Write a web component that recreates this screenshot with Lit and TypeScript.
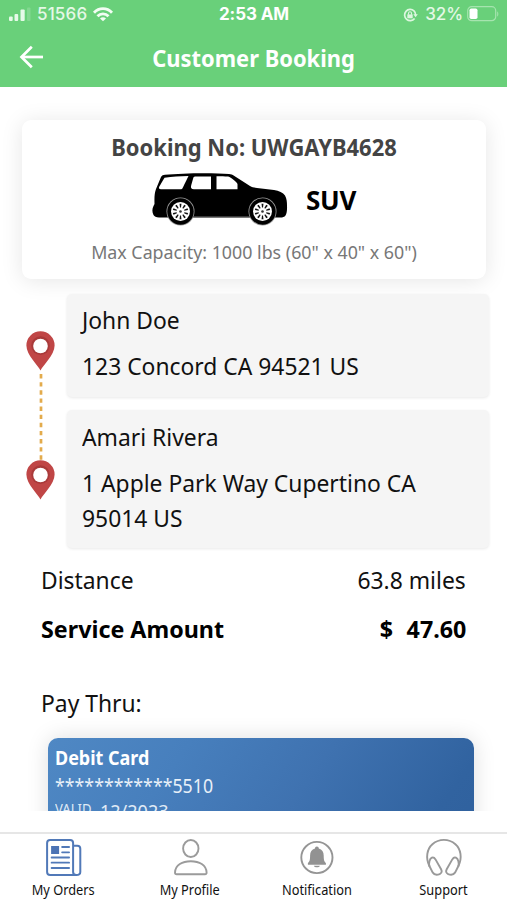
import { LitElement, html, css, svg } from "lit";
import { customElement } from "lit/decorators.js";
import { classMap } from "lit/directives/class-map.js";

const SPOKES = [0, 36, 72, 108, 144, 180, 216, 252, 288, 324];

const wheel = (cx: number) => svg`
  <g transform="translate(${cx} 38.500)">
    <circle r="14" fill="#999" />
    <circle r="13.200" fill="#000" />
    <circle r="9.500" fill="#fff" />
    ${SPOKES.map((a) => svg`<path d="M-1 -7.700h2l-.5 3.800h-1z" fill="#111" transform="rotate(${a})" />`)}
    <circle r="1.3" fill="#333" />
  </g>`;

const suv = html`<svg class="suv" viewBox="0 0 136 54" width="136" height="54">
  <path d="M1.500 42c-1.500-3-1.500-6 0-9l1-2c-.2-7 0-11 1.500-15L9 4C10 2.500 11 2 13 1.800 30 0 62-.3 77 1c2 .2 3.500.8 5 1.700L98 13c2 1.200 4 1.600 7 1.900l17 2c5 .8 9 2.600 11 5.600 1.800 3 2 7 2 10 .2 4-.2 8-1.500 10-1 1.500-3 2-5 2H7c-3 0-4.500-1-5.500-2.500z" />
  <path d="M12.500 4.800c8-1.200 15-1.700 24-1.800L30.500 15.200c-.4.8-1 1-2 1H9c-2 0-2.400-1-1.800-2.500z" fill="#fff" />
  <path d="M43 3.400H59v12.800H42c-2.600 0-3.600-1.500-2.800-4l2-7c.3-1 .8-1.800 1.800-1.800z" fill="#fff" />
  <path d="M64.500 3.200c5 0 8 0 11.500.4 2 .2 9.500 6 9.500 7.600v5H64.500z" fill="#fff" />
  <path d="M42 44h55" stroke="#777" stroke-width="1" />
  ${wheel(28.5)} ${wheel(110.500)}
</svg>`;

const pin = html`<svg viewBox="0 0 29 40" width="29" height="40">
  <path d="M14.500 39.500C12 34 .4 24 .4 14.400a14.100 14.100 0 0 1 28.200 0C28.600 24 17 34 14.500 39.500z" fill="#c04646" />
  <circle cx="14.500" cy="14.600" r="9.300" fill="#a93a3a" />
  <circle cx="14.500" cy="15" r="7.300" fill="#fff" />
</svg>`;

const icons = {
  orders: svg`<g fill="none" stroke="#5179b8" stroke-width="2" transform="translate(.7 0)">
    <path d="M27 6.800V33c0 2 1 3 3.200 3s4-1 4-3V9.800c0-2-1-3-3-3H27M30 36H4c-2 0-3-1-3-3V4c0-2 1-3 3-3h20c2 0 3 1 3 3v28" />
    <path d="M16 8h7M16 13.300h7M5.500 18.500h17.500M5.500 23.700h17.500M5.500 29h17.500" stroke-width="1.800" stroke-linecap="round" />
    <path d="M5 7h8v8H5z" fill="#4b73b5" stroke="none" /></g>`,
  profile: svg`<g fill="none" stroke="#9b9b9b" stroke-width="1.900" stroke-linejoin="round" transform="translate(.9 0)">
    <ellipse cx="17.500" cy="9.500" rx="7.700" ry="8.500" />
    <path d="M1.700 33.500C2 26 9 22.200 17.500 22.200S33 26 33.300 33.500c0 1.200-.5 1.800-1.700 1.800H3.400c-1.200 0-1.700-.6-1.700-1.800z" /></g>`,
  bell: svg`<circle cx="17.500" cy="18.500" r="15.600" fill="none" stroke="#959595" stroke-width="1.900" />
    <path d="M17.500 7.500c1.200 0 1.900.8 1.900 1.900 3.300.9 4.900 3.500 4.900 7 0 4.500.5 6 2.200 7.600v1.700h-18V24c1.700-1.600 2.200-3.100 2.200-7.600 0-3.500 1.600-6.100 4.900-7 0-1.100.7-1.900 1.900-1.900z" fill="#929292" />
    <path d="M14.500 26.800c.5 2 5.500 2 6 0z" fill="#929292" />`,
  support: svg`<g fill="none" stroke="#999" stroke-width="1.900" stroke-linejoin="round" stroke-linecap="round">
    <path d="M3 27C-1 19 .500 10 6 5.200a17.500 17.500 0 0 1 23 0C34.500 10 36 19 32 27" />
    <path d="M3 27c-.8-3 0-7 2.500-8.300 1.600-.6 2.600.1 3.600 1.700l5.600 9.800c1.300 2.500.3 4-1.500 4.900-3 1.300-5.500.5-7-1.700z" />
    <path d="M32 27c.8-3 0-7-2.500-8.300-1.600-.6-2.600.1-3.600 1.700l-5.600 9.800c-1.300 2.500-.3 4 1.500 4.900 3 1.300 5.500.5 7-1.700z" /></g>`,
};

const TABS = [
  { label: "My Orders", icon: icons.orders, cls: "orders" },
  { label: "My Profile", icon: icons.profile, cls: "profile" },
  { label: "Notification", icon: icons.bell, cls: "notification" },
  { label: "Support", icon: icons.support, cls: "support" },
];

@customElement("app-root")
export class AppRoot extends LitElement {
  static styles = css`
    :host {
      display: flex;
      flex-direction: column;
      height: 900px;
      width: 507px;
      overflow: hidden;
      background: #fff;
      color: #111;
      font-family: "Noto Sans", "Open Sans", sans-serif;
      white-space: nowrap;
    }
    * { box-sizing: border-box; }
    svg { display: block; flex: none; overflow: visible; }
    .narrow { display: inline-block; transform: scaleX(0.952); transform-origin: 0 50%; }
    .narrow.end { transform-origin: 100% 50%; }
    header { height: 87px; flex: none; background: #69d07a; color: #fff; }
    .status {
      display: grid;
      grid-template-columns: 1fr auto 1fr;
      height: 29px;
      padding: 0 8px 0 9px;
      align-items: center;
      font: 500 17px/29px Inter, sans-serif;
    }
    .left, .right { display: flex; align-items: center; color: #e4f8e6; }
    .right { justify-content: flex-end; }
    .carrier { margin: 0 6px; letter-spacing: 0.15px; }
    .time { font-weight: 700; letter-spacing: -0.1px; }
    .pct { margin: 0 4px 0 7px; letter-spacing: -0.1px; }
    .bar { display: grid; grid-template-columns: 60px 1fr 60px; height: 58px; align-items: center; }
    .back { margin: -2px 0 0 19px; }
    h1 { margin: 0; text-align: center; font-size: 23px; line-height: 58px; font-weight: 700; transform: scaleX(0.953); }
    main { flex: none; height: 724px; overflow: hidden; }
    .booking {
      height: 159px;
      margin: 33px 21px 0 22px;
      border-radius: 9px;
      background: #fff;
      box-shadow: 0 2px 22px rgba(0, 0, 0, 0.1);
      text-align: center;
    }
    .number { padding-top: 11px; font-size: 22.5px; line-height: 34px; font-weight: 700; color: #444; transform: scaleX(0.976); }
    .vehicle { display: flex; justify-content: center; align-items: center; height: 66px; gap: 18px; }
    .suv { margin-top: 4px; }
    .type { font-size: 26px; line-height: 40px; font-weight: 700; color: #000; margin-top: 4px; letter-spacing: -0.3px; }
    .capacity { margin-top: 4px; font-size: 18px; line-height: 34px; color: #777; transform: scaleX(0.99); }
    .route { display: flex; margin-top: 15px; padding-right: 18px; }
    .track { width: 67px; flex: none; display: flex; flex-direction: column; align-items: center; padding: 37px 0 0 14px; }
    .stops { flex: 1; display: flex; flex-direction: column; gap: 13px; }
    .stop {
      background: #f5f5f5;
      border-radius: 5px;
      box-shadow: 0 1px 3px rgba(0, 0, 0, 0.09);
      padding: 8px 15px 14px;
      font-size: 24px;
      line-height: 35px;
    }
    .stop + .stop { padding: 9px 15px 13px; }
    .name { margin-bottom: 11px; }
    .row { display: flex; justify-content: space-between; padding: 0 41px; font-size: 24px; line-height: 48px; }
    .distance { margin-top: 8px; }
    .amount { font-weight: 700; color: #000; margin-top: 1px; }
    .amount .narrow { transform: scaleX(0.97); }
    .money { display: inline-flex; gap: 14px; }
    .pay { margin: 25px 0 0 41px; font-size: 24px; line-height: 50px; }
    .card {
      margin: 10px 33px 0 48px;
      height: 220px;
      border-radius: 10px;
      padding: 5px 7px;
      color: #fff;
      background: linear-gradient(125deg, #4f88c4 0%, #477fbd 25%, #3f72b0 50%, #3163a0 76%, #2d5e9b 100%);
      box-shadow: 0 0 22px rgba(0, 0, 0, 0.13);
    }
    .kind { font-size: 19px; line-height: 31px; font-weight: 700; }
    .kind .narrow { transform: scaleX(0.945); }
    .digits { font-size: 19px; line-height: 24px; color: #e8f0f8; }
    .digits .narrow { transform: scaleX(0.935); }
    .valid { display: flex; color: #e0ebf6; line-height: 24px; font-size: 18px; margin-top: 1px; }
    .valid .tag { font-size: 14px; line-height: 20px; width: 45px; }
    .valid .narrow { transform: scaleX(0.935); }
    nav {
      margin-top: 21px;
      height: 68px;
      border-top: 2px solid #e6e6e6;
      display: grid;
      grid-template-columns: repeat(4, 1fr);
      font-size: 13.500px;
    }
    .tab { display: flex; flex-direction: column; align-items: center; padding-top: 5px; }
    .tab span { line-height: 20px; margin-top: 4px; transform: scaleX(0.947); }
  `;

  render() {
    return html`
      <header>
        <div class="status">
          <div class="left">
            <svg viewBox="0 0 22 14" width="22" height="14" fill="#e6fae9">
              <rect x="0" y="8.500" width="3.700" height="4.500" rx="1" />
              <rect x="5.500" y="6" width="3.700" height="7" rx="1" />
              <rect x="11.500" y="1.500" width="4.200" height="11.500" rx="1" />
              <rect x="18" y="-.5" width="3.500" height="13.500" rx="1" opacity=".2" />
            </svg>
            <span class="carrier">51566</span>
            <svg viewBox="0 0 20 15" width="20" height="15" fill="none" stroke="#f2fdf3" stroke-width="2.800">
              <path d="M1 5.700C6 .3 14 .3 19 5.700M4.500 9.300c3-3.200 8-3.200 11 0" />
              <path d="M10 14.300l-3-2.900c1.700-1.500 4.300-1.500 6 0z" fill="#f2fdf3" stroke="none" />
            </svg>
          </div>
          <span class="time">2:53 AM</span>
          <div class="right">
            <svg viewBox="0 0 15 14" width="15" height="14" fill="none" stroke="#ddf6df" stroke-width="1.700">
              <path d="M11 2.900A5.600 5.600 0 1 0 11.600 10.500M11 2.900a5.600 5.600 0 0 1 1.600 4" />
              <path d="M10.300 6.200h4.500l-2.200 3z" fill="#ddf6df" stroke="none" />
              <rect x="4.300" y="6.400" width="5.400" height="3.900" fill="#ddf6df" stroke="none" />
              <path d="M5.500 6.700V5.200c0-2 3-2 3 0v1.500" stroke-width="1.100" />
            </svg>
            <span class="pct">32%</span>
            <svg viewBox="0 0 32 16" width="32" height="16">
              <rect x=".7" y="-.3" width="28" height="14" rx="4" fill="none" stroke="#a6e4af" stroke-width="1.200" />
              <rect x="2.500" y="1.500" width="8" height="10.500" rx="1.800" fill="#fff" />
              <path d="M30.200 4.500c1.500.5 1.500 4.500 0 5z" fill="#a6e4af" />
            </svg>
          </div>
        </div>
        <div class="bar">
          <svg class="back" viewBox="0 0 26 24" width="26" height="24" fill="none" stroke="#fff" stroke-width="2.700">
            <path d="M24 12H3" />
            <path d="M12.800 1.800L2.500 12l10.300 10.200" />
          </svg>
          <h1>Customer Booking</h1>
        </div>
      </header>
      <main>
        <section class="booking">
          <div class="number">Booking No: UWGAYB4628</div>
          <div class="vehicle">${suv}<span class="type">SUV</span></div>
          <div class="capacity">Max Capacity: 1000 lbs (60" x 40" x 60")</div>
        </section>
        <section class="route">
          <div class="track">
            ${pin}
            <svg viewBox="0 0 4 89" width="4" height="89">
              <path d="M2 3v86" stroke="#e3ab4c" stroke-width="2.700" stroke-dasharray="4.400 3.730" />
            </svg>
            ${pin}
          </div>
          <div class="stops">
            <div class="stop">
              <div class="name"><span class="narrow">John Doe</span></div>
              <div><span class="narrow">123 Concord CA 94521 US</span></div>
            </div>
            <div class="stop">
              <div class="name"><span class="narrow">Amari Rivera</span></div>
              <div><span class="narrow">1 Apple Park Way Cupertino CA<br />95014 US</span></div>
            </div>
          </div>
        </section>
        <div class="row distance"><span class="narrow">Distance</span><span class="narrow end">63.8 miles</span></div>
        <div class="row amount">
          <span class="narrow">Service Amount</span>
          <span class="narrow end money"><span>$</span><span>47.60</span></span>
        </div>
        <div class="pay"><span class="narrow">Pay Thru:</span></div>
        <section class="card">
          <div class="kind"><span class="narrow">Debit Card</span></div>
          <div class="digits"><span class="narrow">************5510</span></div>
          <div class="valid"><span class="tag"><span class="narrow">VALID</span></span><span>12/2023</span></div>
        </section>
      </main>
      <nav>
        ${TABS.map(
          (t) => html`<div class=${classMap({ tab: true, [t.cls]: true })}>
            <svg viewBox="0 0 35.200 37" width="36" height="37">${t.icon}</svg>
            <span>${t.label}</span>
          </div>`,
        )}
      </nav>
    `;
  }
}
